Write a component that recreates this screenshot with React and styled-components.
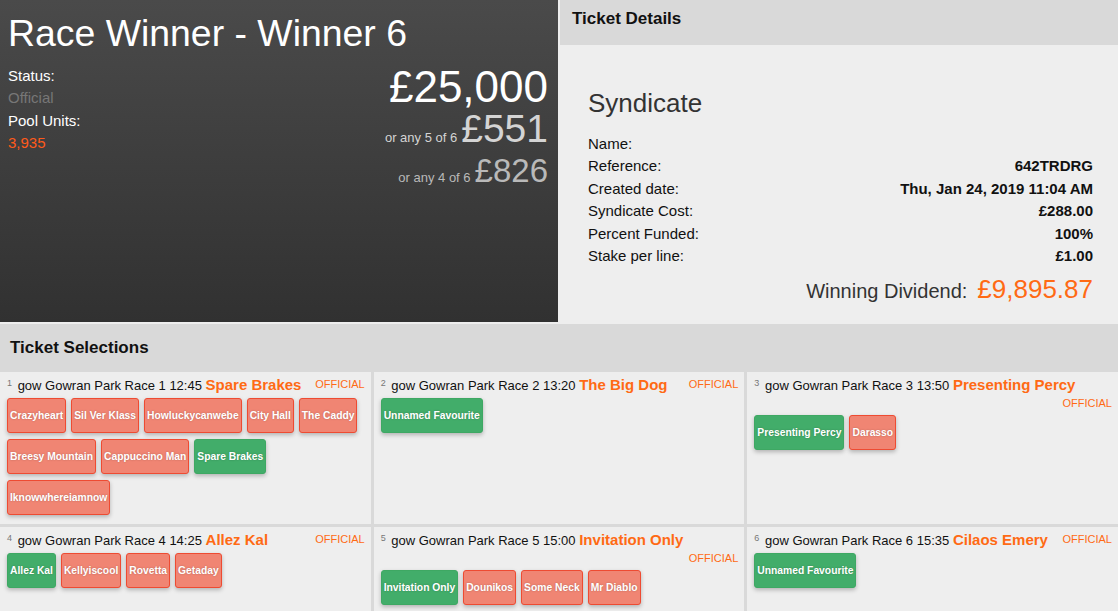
import React from "react"
import styled, { createGlobalStyle } from "styled-components"

const ORANGE = "#ff6a14"

const races = [
  {
    n: 1,
    race: "gow Gowran Park Race 1 12:45",
    winner: "Spare Brakes",
    runners: [
      ["Crazyheart"], ["Sil Ver Klass"], ["Howluckycanwebe"], ["City Hall"], ["The Caddy"],
      ["Breesy Mountain"], ["Cappuccino Man"], ["Spare Brakes", true], ["Iknowwhereiamnow"],
    ],
  },
  { n: 2, race: "gow Gowran Park Race 2 13:20", winner: "The Big Dog", runners: [["Unnamed Favourite", true]] },
  {
    n: 3,
    race: "gow Gowran Park Race 3 13:50",
    winner: "Presenting Percy",
    runners: [["Presenting Percy", true], ["Darasso"]],
  },
  {
    n: 4,
    race: "gow Gowran Park Race 4 14:25",
    winner: "Allez Kal",
    runners: [["Allez Kal", true], ["Kellyiscool"], ["Rovetta"], ["Getaday"]],
  },
  {
    n: 5,
    race: "gow Gowran Park Race 5 15:00",
    winner: "Invitation Only",
    runners: [["Invitation Only", true], ["Dounikos"], ["Some Neck"], ["Mr Diablo"]],
  },
  { n: 6, race: "gow Gowran Park Race 6 15:35", winner: "Cilaos Emery", runners: [["Unnamed Favourite", true]] },
]

const details = [
  ["Name:", ""],
  ["Reference:", "642TRDRG"],
  ["Created date:", "Thu, Jan 24, 2019 11:04 AM"],
  ["Syndicate Cost:", "£288.00"],
  ["Percent Funded:", "100%"],
  ["Stake per line:", "£1.00"],
]

const App = () => {
  return (
    <Page>
      <GlobalStyle />
      <TopRow>
        <Hero>
          <HeroTitle>Race Winner - Winner 6</HeroTitle>
          <HeroBody>
            <InfoList>
              <div>Status:</div>
              <InfoValue $color="#777">Official</InfoValue>
              <div>Pool Units:</div>
              <InfoValue $color="#ff5a1a">3,935</InfoValue>
            </InfoList>
            <Prizes>
              <PrizeLine $size={44} $color="#fff">£25,000</PrizeLine>
              <PrizeLine $size={39} $color="#d4d4d4" $gap={0}>
                <PrizeNote>or any 5 of 6</PrizeNote>£551
              </PrizeLine>
              <PrizeLine $size={33} $color="#b9b9b9" $gap={6}>
                <PrizeNote>or any 4 of 6</PrizeNote>£826
              </PrizeLine>
            </Prizes>
          </HeroBody>
        </Hero>
        <DetailsPanel>
          <PanelHeader>Ticket Details</PanelHeader>
          <DetailsBody>
            <SyndicateTitle>Syndicate</SyndicateTitle>
            {details.map(([label, value]) => (
              <DetailRow key={label}>
                <span>{label}</span>
                <DetailValue>{value}</DetailValue>
              </DetailRow>
            ))}
            <Dividend>
              <DividendLabel>Winning Dividend:</DividendLabel>
              <DividendAmount>£9,895.87</DividendAmount>
            </Dividend>
          </DetailsBody>
        </DetailsPanel>
      </TopRow>
      <Selections>
        <SelectionsHeader>Ticket Selections</SelectionsHeader>
        <RaceGrid>
          {races.map((r) => (
            <RaceCard key={r.n}>
              <RaceHeader>
                <LegNumber>{r.n}</LegNumber> {r.race} <WinnerName>{r.winner}</WinnerName>
                <Official>OFFICIAL</Official>
              </RaceHeader>
              <Runners>
                {r.runners.map(([name, won]) => (
                  <Runner key={name} $won={won}>{name}</Runner>
                ))}
              </Runners>
            </RaceCard>
          ))}
        </RaceGrid>
      </Selections>
    </Page>
  )
}

export default App

const GlobalStyle = createGlobalStyle`
  * { box-sizing: border-box; }
  body {
    margin: 0;
    font-family: "Liberation Sans", Arial, sans-serif;
    background: #eeeeee;
    color: #111;
  }
`

const Page = styled.div`
  display: flex;
  flex-direction: column;
  gap: 2px;
  width: 1118px;
  background: #eeeeee;
`

const TopRow = styled.div`
  display: grid;
  grid-template-columns: 558px 1fr;
  gap: 2px;
  height: 322px;
`

const Hero = styled.section`
  background: linear-gradient(to bottom, #4a4a4a, #313131);
  color: #fff;
  padding: 12px 10px 0 8px;
`

const HeroTitle = styled.h1`
  margin: 0;
  font-size: 37.4px;
  font-weight: 400;
  line-height: 42px;
`

const HeroBody = styled.div`
  display: flex;
  justify-content: space-between;
  align-items: flex-start;
  margin-top: 11px;
`

const InfoList = styled.div`
  font-size: 15px;
  line-height: 22.4px;
`

const InfoValue = styled.div`
  color: ${(p) => p.$color};
`

const Prizes = styled.div`
  text-align: right;
`

const PrizeLine = styled.div`
  font-size: ${(p) => p.$size}px;
  line-height: ${(p) => p.$size}px;
  color: ${(p) => p.$color};
  margin-top: ${(p) => p.$gap || 0}px;
`

const PrizeNote = styled.span`
  font-size: 13px;
  line-height: 1;
  margin-right: 4px;
`

const DetailsPanel = styled.section`
  display: flex;
  flex-direction: column;
`

const PanelHeader = styled.h2`
  margin: 0;
  height: 45px;
  padding: 9px 12px 0;
  background: #d9d9d9;
  font-size: 17px;
  font-weight: 700;
  line-height: 20px;
`

const DetailsBody = styled.div`
  flex: 1;
  padding: 43px 25px 0 28px;
  background: #eeeeee;
`

const SyndicateTitle = styled.h3`
  margin: 0 0 15px;
  font-size: 26px;
  font-weight: 400;
  line-height: 30px;
  color: #333;
`

const DetailRow = styled.div`
  display: flex;
  justify-content: space-between;
  font-size: 15px;
  line-height: 22.4px;
`

const DetailValue = styled.span`
  font-weight: 700;
`

const Dividend = styled.div`
  display: flex;
  justify-content: flex-end;
  align-items: baseline;
  gap: 10px;
  margin-top: 4px;
  line-height: 36px;
`

const DividendLabel = styled.span`
  font-size: 20px;
  color: #333;
`

const DividendAmount = styled.span`
  font-size: 26px;
  color: ${ORANGE};
`

const Selections = styled.section`
  display: flex;
  flex-direction: column;
`

const SelectionsHeader = styled.h2`
  margin: 0;
  padding: 14px 10px 14px;
  background: #d9d9d9;
  font-size: 17px;
  font-weight: 700;
  line-height: 20px;
`

const RaceGrid = styled.div`
  display: grid;
  grid-template-columns: repeat(3, 1fr);
  gap: 3px;
  background: #d9d9d9;
`

const RaceCard = styled.div`
  background: #eeeeee;
  padding: 3px 6px 9px 7px;
`

const RaceHeader = styled.div`
  display: flow-root;
  font-size: 13px;
  line-height: 17px;
  color: #111;
  margin-bottom: 4px;
`

const LegNumber = styled.span`
  font-size: 9px;
  color: #777;
  vertical-align: 4px;
  margin-right: 2px;
`

const WinnerName = styled.span`
  font-size: 15px;
  font-weight: 700;
  color: ${ORANGE};
`

const Official = styled.span`
  float: right;
  margin: 1px 0 -1px 8px;
  font-size: 11px;
  color: ${ORANGE};
`

const Runners = styled.div`
  display: flex;
  flex-wrap: wrap;
  gap: 6px 5px;
`

const Runner = styled.span`
  display: inline-flex;
  align-items: center;
  height: 35px;
  padding: 0 2px;
  border: 1px solid ${(p) => (p.$won ? "#3ea863" : "#ee4b32")};
  border-radius: 3px;
  background: ${(p) => (p.$won ? "#42ad6a" : "#f08573")};
  box-shadow: 0 2px 4px rgba(0, 0, 0, 0.25);
  color: #fff;
  font-size: 10.3px;
  font-weight: 700;
  white-space: nowrap;
  text-shadow: 0 0 2px rgba(0, 0, 0, 0.25);
`
